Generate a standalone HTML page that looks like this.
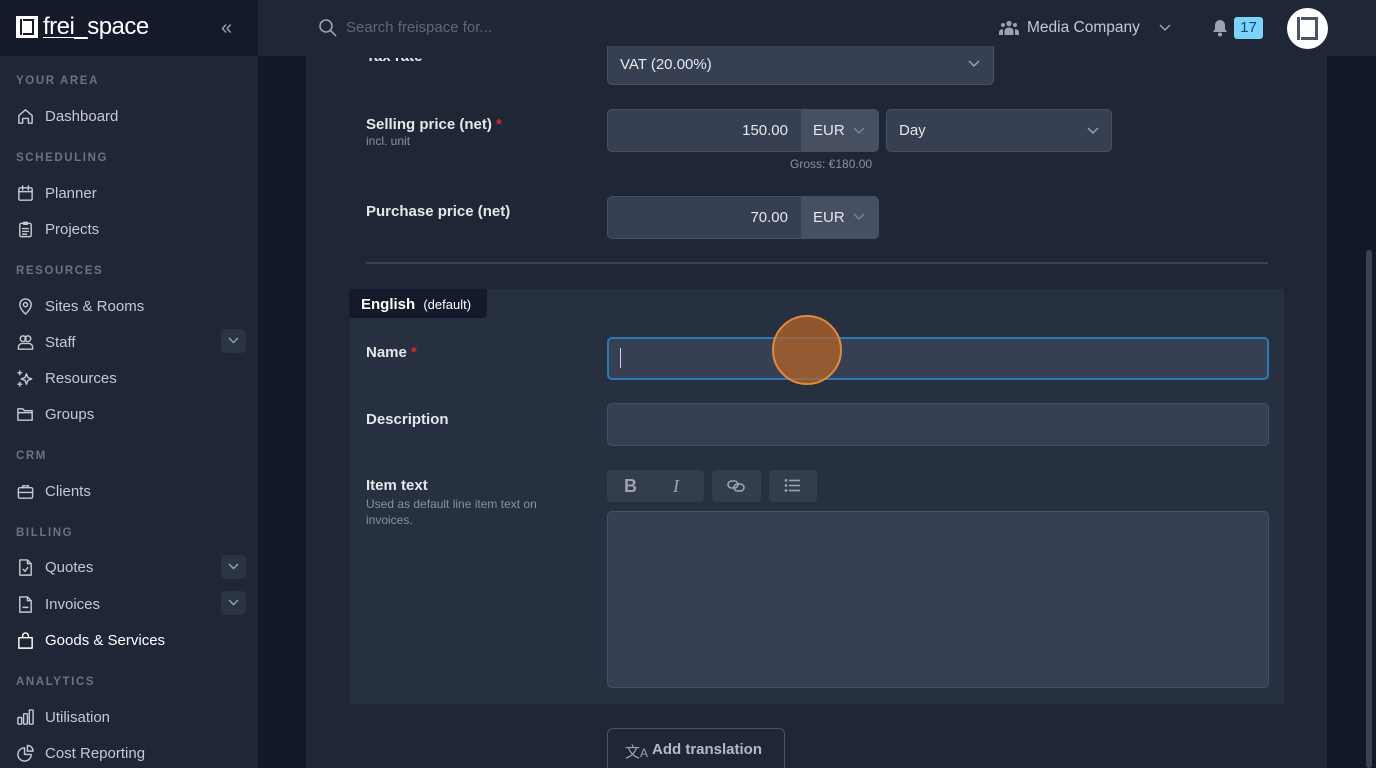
<!DOCTYPE html>
<html style="overflow:hidden;width:1376px;height:768px"><head><meta charset="utf-8"><style>
*{box-sizing:border-box;margin:0;padding:0}
body{width:1376px;height:768px;overflow:hidden;background:#111827;font-family:"Liberation Sans",sans-serif;position:relative;color:#d1d5db}
.a{position:absolute}
.sb{left:0;top:56px;width:258px;height:712px;background:#1f2737}
.sec{position:absolute;left:16px;font-size:11.5px;font-weight:bold;letter-spacing:1.6px;color:#6b7280}
.it{position:absolute;left:16px;font-size:15px;color:#c4c9d2;display:flex;align-items:center;gap:10px}
.it svg{width:19px;height:19px;fill:none;stroke:#c4c9d2;stroke-width:1.5;stroke-linecap:round;stroke-linejoin:round}
.chev{position:absolute;left:221px;width:25px;height:24px;border-radius:5px;background:#2b3444}
.chev svg{position:absolute;left:7px;top:8px}
.lbl{position:absolute;left:366px;font-size:15px;font-weight:bold;color:#e5e7eb}
.sub{font-size:12px;color:#8a919c;font-weight:normal;line-height:16px}
.inp{position:absolute;background:#364052;border:1px solid #465062;border-radius:5px}
.star{color:#dc2626}
</style></head><body>
<div class="a" style="left:0;top:0;width:258px;height:56px;background:#141a29"></div>
<div class="a" style="left:258px;top:0;width:1118px;height:56px;background:#1f2737"></div>
<div class="a" style="left:16px;top:16px;width:22px;height:22px;background:#fff"><div style="position:absolute;left:4px;top:3px;width:14px;height:16px;border:2px solid #141a29;border-top:none;border-bottom:none"></div><div style="position:absolute;left:7px;top:3px;width:9px;height:16px;border-top:2px solid #141a29;border-bottom:2px solid #141a29"></div></div>
<div class="a" style="left:43px;top:13px;font-size:24px;color:#fff;letter-spacing:-0.5px"><span style="text-decoration:underline;text-underline-offset:3px;text-decoration-thickness:1px">frei_</span>space</div>
<div class="a" style="left:221px;top:17px;font-size:20px;color:#9ca3af">«</div>
<svg class="a" style="left:318px;top:18px" width="20" height="20" viewBox="0 0 20 20" fill="none" stroke="#9ca3af" stroke-width="1.6"><circle cx="8" cy="8" r="6"/><path d="M12.5 12.5L18 18"/></svg>
<div class="a" style="left:346px;top:19px;font-size:15px;color:#5f6775">Search freispace for...</div>
<svg class="a" style="left:999px;top:20px" width="20" height="16" viewBox="0 0 20 16" fill="#9ca3af"><circle cx="10" cy="3.5" r="2.6"/><circle cx="4" cy="5" r="2"/><circle cx="16" cy="5" r="2"/><path d="M5.5 15v-4a4.5 3.5 0 0 1 9 0v4z"/><path d="M0 15v-3a3 3 0 0 1 4-2.5v5.5zM20 15v-3a3 3 0 0 0-4-2.5v5.5z"/></svg>
<div class="a" style="left:1027px;top:19px;font-size:15.5px;color:#c4c9d2">Media Company</div>
<svg class="a" style="left:1159px;top:24px" width="12" height="8" viewBox="0 0 12 8" fill="none" stroke="#9ca3af" stroke-width="1.5"><path d="M1 1l5 5 5-5"/></svg>
<svg class="a" style="left:1212px;top:19px" width="16" height="18" viewBox="0 0 16 18" fill="#9ca3af"><path d="M8 1a5 5 0 0 0-5 5v4l-2 3h14l-2-3V6a5 5 0 0 0-5-5z"/><circle cx="8" cy="15.5" r="2"/></svg>
<div class="a" style="left:1234px;top:17px;width:29px;height:22px;background:#7dd3fc;border-radius:3px;color:#0c4a6e;font-size:15px;text-align:center;line-height:22px">17</div>
<div class="a" style="left:1287px;top:8px;width:41px;height:41px;border-radius:50%;background:#fff"><div style="position:absolute;left:10px;top:9px;width:21px;height:23px;border:3px solid #4b5563;border-top:none;border-bottom:none"></div><div style="position:absolute;left:14px;top:9px;width:14px;height:23px;border-top:3px solid #4b5563;border-bottom:3px solid #4b5563"></div></div>

<div class="a sb"></div>
<div class="sec" style="top:75px">YOUR AREA</div>
<div class="it" style="top:107px"><svg viewBox="0 0 20 20"><path d="M3 9l7-6 7 6v8h-4v-5H7v5H3z"/></svg>Dashboard</div>
<div class="sec" style="top:152px">SCHEDULING</div>
<div class="it" style="top:184px"><svg viewBox="0 0 20 20"><rect x="3" y="4" width="14" height="13" rx="1.5"/><path d="M3 8h14M7 2v4M13 2v4"/></svg>Planner</div>
<div class="it" style="top:220px"><svg viewBox="0 0 20 20"><rect x="4" y="3.5" width="12" height="14" rx="1.5"/><path d="M8 2.5h4v2H8zM7 9h6M7 12h6M7 15h4"/></svg>Projects</div>
<div class="sec" style="top:265px">RESOURCES</div>
<div class="it" style="top:297px"><svg viewBox="0 0 20 20"><path d="M10 18s-6-5.5-6-10a6 6 0 0 1 12 0c0 4.5-6 10-6 10z"/><circle cx="10" cy="8" r="2.2"/></svg>Sites &amp; Rooms</div>
<div class="it" style="top:333px"><svg viewBox="0 0 20 20"><circle cx="7.5" cy="6" r="3"/><circle cx="12.5" cy="6" r="3"/><path d="M2.5 17v-2a4 4 0 0 1 4-4h7a4 4 0 0 1 4 4v2z"/></svg>Staff</div>
<div class="chev" style="top:329px"><svg width="11" height="7" viewBox="0 0 11 7" fill="none" stroke="#9ca3af" stroke-width="1.4"><path d="M1 1l4.5 4.5L10 1"/></svg></div>
<div class="it" style="top:369px"><svg viewBox="0 0 20 20"><path d="M11 5l1.5 4 4 1.5-4 1.5-1.5 4-1.5-4-4-1.5 4-1.5zM4 2v4M2 4h4M4 14v4M2 16h4"/></svg>Resources</div>
<div class="it" style="top:405px"><svg viewBox="0 0 20 20"><path d="M2 6V4h5l2 2h8v10H2zM2 8h15"/></svg>Groups</div>
<div class="sec" style="top:450px">CRM</div>
<div class="it" style="top:482px"><svg viewBox="0 0 20 20"><rect x="2.5" y="6" width="15" height="11" rx="1.5"/><path d="M7 6V4h6v2M2.5 11h15"/></svg>Clients</div>
<div class="sec" style="top:527px">BILLING</div>
<div class="it" style="top:558px"><svg viewBox="0 0 20 20"><path d="M4 2h8l4 4v12H4zM12 2v4h4M7.5 12l2 2 3-4"/></svg>Quotes</div>
<div class="chev" style="top:555px"><svg width="11" height="7" viewBox="0 0 11 7" fill="none" stroke="#9ca3af" stroke-width="1.4"><path d="M1 1l4.5 4.5L10 1"/></svg></div>
<div class="it" style="top:595px"><svg viewBox="0 0 20 20"><path d="M4 2h8l4 4v12H4zM12 2v4h4M7.5 13h5"/></svg>Invoices</div>
<div class="chev" style="top:591px"><svg width="11" height="7" viewBox="0 0 11 7" fill="none" stroke="#9ca3af" stroke-width="1.4"><path d="M1 1l4.5 4.5L10 1"/></svg></div>
<div class="it" style="top:631px;color:#fff"><svg viewBox="0 0 20 20" style="stroke:#fff"><path d="M3 7h14v11H3zM7 7V5a3 3 0 0 1 6 0v2"/></svg>Goods &amp; Services</div>
<div class="sec" style="top:676px">ANALYTICS</div>
<div class="it" style="top:708px"><svg viewBox="0 0 20 20"><rect x="2" y="10" width="4" height="7" rx="1"/><rect x="8" y="6" width="4" height="11" rx="1"/><rect x="14" y="2" width="4" height="15" rx="1"/></svg>Utilisation</div>
<div class="it" style="top:744px"><svg viewBox="0 0 20 20"><path d="M9 4a7 7 0 1 0 7 7H9z"/><path d="M12 1.5a6 6 0 0 1 6 6h-6z"/></svg>Cost Reporting</div>

<div class="a" style="left:306px;top:56px;width:1021px;height:712px;background:#1f2737"></div>
<div class="a" style="left:1366px;top:250px;width:6px;height:518px;background:#3a4250;border-radius:3px"></div>

<div class="lbl" style="top:48px;clip-path:inset(10px 0 0 0)">Tax rate</div>
<div class="inp" style="left:607px;top:46px;width:387px;height:39px;border-top:none;border-radius:0 0 5px 5px"></div>
<div class="a" style="left:620px;top:56px;font-size:15px;color:#e5e7eb">VAT (20.00%)</div>
<svg class="a" style="left:968px;top:60px" width="12" height="8" viewBox="0 0 12 8" fill="none" stroke="#9ca3af" stroke-width="1.5"><path d="M1 1l5 5 5-5"/></svg>

<div class="lbl" style="top:116px">Selling price (net) <span class="star">*</span><div class="sub">incl. unit</div></div>
<div class="inp" style="left:607px;top:109px;width:272px;height:43px;overflow:hidden"><div style="position:absolute;left:193px;top:0;width:80px;height:43px;background:#465062"></div></div>
<div class="a" style="left:700px;top:122px;width:88px;text-align:right;font-size:15px;color:#e5e7eb">150.00</div>
<div class="a" style="left:813px;top:122px;font-size:15px;color:#e5e7eb">EUR</div>
<svg class="a" style="left:853px;top:127px" width="12" height="8" viewBox="0 0 12 8" fill="none" stroke="#7b8391" stroke-width="1.5"><path d="M1 1l5 5 5-5"/></svg>
<div class="inp" style="left:886px;top:109px;width:226px;height:43px"></div>
<div class="a" style="left:899px;top:122px;font-size:15px;color:#e5e7eb">Day</div>
<svg class="a" style="left:1087px;top:127px" width="12" height="8" viewBox="0 0 12 8" fill="none" stroke="#9ca3af" stroke-width="1.5"><path d="M1 1l5 5 5-5"/></svg>
<div class="a" style="left:790px;top:157px;font-size:12px;color:#8a919c">Gross: €180.00</div>

<div class="lbl" style="top:203px">Purchase price (net)</div>
<div class="inp" style="left:607px;top:196px;width:272px;height:43px;overflow:hidden"><div style="position:absolute;left:193px;top:0;width:80px;height:43px;background:#465062"></div></div>
<div class="a" style="left:700px;top:209px;width:88px;text-align:right;font-size:15px;color:#e5e7eb">70.00</div>
<div class="a" style="left:813px;top:209px;font-size:15px;color:#e5e7eb">EUR</div>
<svg class="a" style="left:853px;top:213px" width="12" height="8" viewBox="0 0 12 8" fill="none" stroke="#7b8391" stroke-width="1.5"><path d="M1 1l5 5 5-5"/></svg>

<div class="a" style="left:366px;top:262px;width:902px;height:2px;background:#3a4352"></div>

<div class="a" style="left:350px;top:289px;width:934px;height:415px;background:#263040"></div>
<div class="a" style="left:349px;top:289px;width:138px;height:29px;background:#141a29;border-radius:0 0 3px 0"></div>
<div class="a" style="left:361px;top:296px;font-size:15px;font-weight:bold;color:#fff">English <span style="font-size:13px;font-weight:normal;margin-left:4px">(default)</span></div>

<div class="lbl" style="top:344px">Name <span class="star">*</span></div>
<div class="inp" style="left:607px;top:337px;width:662px;height:43px;border:2px solid #2b7ab8"></div>
<div class="a" style="left:620px;top:348px;width:1px;height:20px;background:#d1d5db"></div>
<div class="a" style="left:772px;top:315px;width:70px;height:70px;border-radius:50%;background:rgba(180,100,40,0.75);border:2px solid #e08a3c"></div>

<div class="lbl" style="top:411px">Description</div>
<div class="inp" style="left:607px;top:403px;width:662px;height:43px"></div>

<div class="lbl" style="top:477px">Item text<div class="sub" style="margin-top:2px;width:210px">Used as default line item text on invoices.</div></div>
<div class="a" style="left:607px;top:470px;width:97px;height:32px;background:#343d4e;border-radius:4px"></div>
<div class="a" style="left:624px;top:476px;font-size:18px;font-weight:bold;color:#9ca3af">B</div>
<div class="a" style="left:673px;top:476px;font-size:18px;font-style:italic;color:#9ca3af;font-family:'Liberation Serif',serif">I</div>
<div class="a" style="left:712px;top:470px;width:49px;height:32px;background:#343d4e;border-radius:4px"></div>
<svg class="a" style="left:727px;top:479px" width="18" height="14" viewBox="0 0 18 14" fill="none" stroke="#9ca3af" stroke-width="1.6"><rect x="1" y="2" width="10" height="7" rx="3.5"/><rect x="7" y="5" width="10" height="7" rx="3.5"/></svg>
<div class="a" style="left:769px;top:470px;width:48px;height:32px;background:#343d4e;border-radius:4px"></div>
<svg class="a" style="left:784px;top:478px" width="17" height="15" viewBox="0 0 17 15" fill="#9ca3af"><circle cx="2" cy="2.5" r="1.4"/><circle cx="2" cy="7.5" r="1.4"/><circle cx="2" cy="12.5" r="1.4"/><rect x="5" y="1.7" width="11" height="1.6"/><rect x="5" y="6.7" width="11" height="1.6"/><rect x="5" y="11.7" width="11" height="1.6"/></svg>
<div class="inp" style="left:607px;top:511px;width:662px;height:177px"></div>

<div class="a" style="left:607px;top:728px;width:178px;height:40px;border:1px solid #4b5563;border-bottom:none;border-radius:6px 6px 0 0"></div>
<div class="a" style="left:625px;top:741px;font-size:15px;color:#9ca3af">文<span style="font-size:12px">A</span></div>
<div class="a" style="left:652px;top:741px;font-size:15px;font-weight:bold;color:#b4bac4">Add translation</div>
</body></html>
